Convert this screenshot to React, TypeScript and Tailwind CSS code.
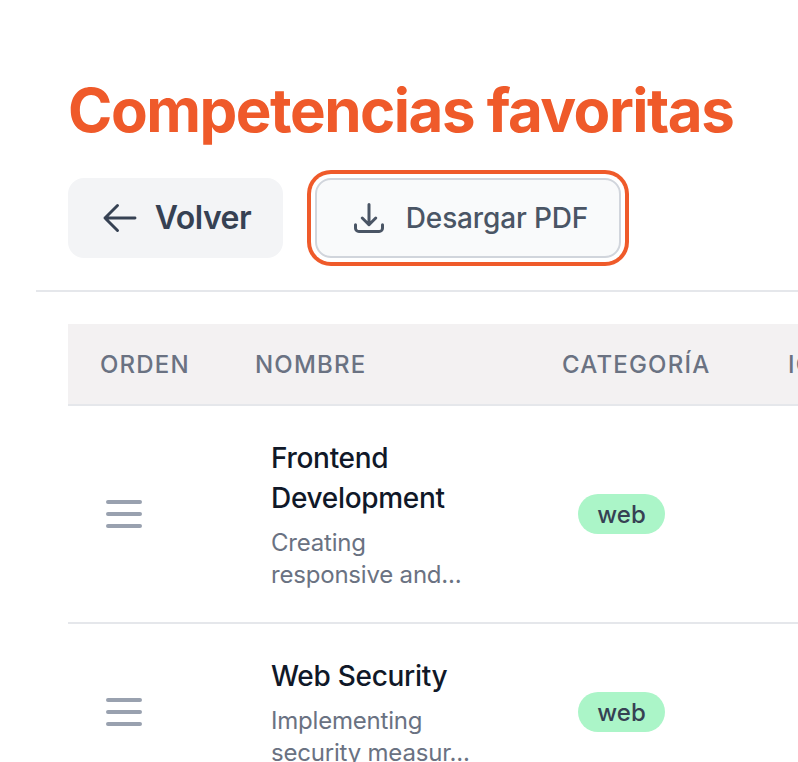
const skills = [
  { name: "Frontend Development", desc: ["Creating", "responsive and..."], category: "web" },
  { name: "Web Security", desc: ["Implementing", "security measur..."], category: "web" },
];

function DragHandle() {
  return (
    <svg width="36" height="30" viewBox="0 0 36 30" className="text-gray-400" fill="none" stroke="currentColor" strokeWidth="4" strokeLinecap="round">
      <path d="M2 3h32M2 15h32M2 27h32" />
    </svg>
  );
}

export default function App() {
  return (
    <div className="h-[762px] w-[798px] overflow-hidden bg-white font-['Inter',sans-serif]">
      <div className="pl-9 pt-[74px]">
        <h1 className="pl-8 text-[60px] leading-[72px] font-bold tracking-[-1.5px] whitespace-nowrap text-[#ef5a2a]">Competencias favoritas</h1>

        <div className="mt-8 flex gap-8 pl-8">
          <button className="flex h-20 w-[215px] items-center justify-center gap-[15px] rounded-2xl bg-gray-100 text-[32px] font-semibold tracking-[-0.5px] text-gray-700">
            <svg width="40" height="40" viewBox="0 0 24 24" fill="none" stroke="currentColor" strokeWidth="1.75" strokeLinecap="round" strokeLinejoin="round">
              <path d="M10.5 19.5 3 12l7.5-7.5M3 12h18" />
            </svg>
            Volver
          </button>
          <button className="flex h-20 w-[306px] items-center justify-center gap-[19px] rounded-2xl border-2 border-gray-300 bg-gray-50 pl-[3px] text-[28px] font-medium tracking-[-0.15px] text-gray-600 ring-4 ring-[#ef5a2a] ring-offset-4 ring-offset-white">
            <svg width="36" height="36" viewBox="0 0 24 24" fill="none" stroke="currentColor" strokeWidth="2" strokeLinecap="round" strokeLinejoin="round">
              <path d="M3 16.5v2.25A2.25 2.25 0 0 0 5.25 21h13.5A2.25 2.25 0 0 0 21 18.75V16.5M16.5 12 12 16.5m0 0L7.5 12m4.5 4.5V3" />
            </svg>
            Desargar PDF
          </button>
        </div>

        <div className="mt-8 border-t-2 border-gray-200 pt-8 pl-8">
          <table className="w-[1000px] table-fixed border-collapse text-left">
            <thead>
              <tr className="h-[81px] border-b-2 border-gray-200 bg-[#f3f1f2] text-2xl font-medium tracking-[1.2px] text-gray-500">
                <th className="w-[155px] pt-0.5 pl-8 font-medium">ORDEN</th>
                <th className="w-[307px] pt-0.5 pl-8 font-medium">NOMBRE</th>
                <th className="w-[226px] pt-0.5 pl-8 font-medium">CATEGORÍA</th>
                <th className="pt-0.5 pl-8 font-medium">ICONO</th>
              </tr>
            </thead>
            <tbody>
              {skills.map((s) => (
                <tr key={s.name} className="border-b-2 border-gray-200">
                  <td className="pl-[38px] align-middle">
                    <DragHandle />
                  </td>
                  <td className="pt-8 pr-8 pb-[31px] pl-12">
                    <div className="w-[200px] text-[28px] leading-10 font-medium tracking-[-0.3px] text-gray-900">{s.name}</div>
                    <div className="mt-[9px] text-2xl leading-8 tracking-[-0.2px] whitespace-nowrap text-gray-500">
                      {s.desc.map((line) => (
                        <div key={line}>{line}</div>
                      ))}
                    </div>
                  </td>
                  <td className="pl-12">
                    <span className="inline-flex h-10 w-[87px] items-center justify-center rounded-full bg-[#abf5c8] pt-0.5 text-2xl font-medium text-gray-700">{s.category}</span>
                  </td>
                  <td />
                </tr>
              ))}
            </tbody>
          </table>
        </div>
      </div>
    </div>
  );
}
